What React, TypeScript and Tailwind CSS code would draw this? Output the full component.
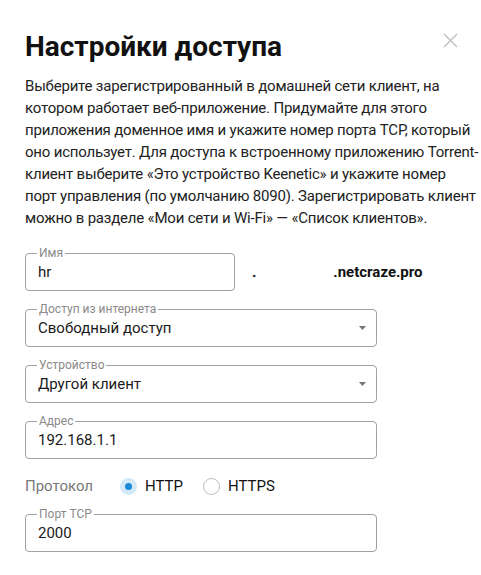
import React from 'react';

const font = { fontFamily: 'Roboto, "Noto Sans", sans-serif' };

const Field = ({ label, value, select = false, width = 'w-[352px]' }: { label: string; value: string; select?: boolean; width?: string }) => (
  <fieldset className={`${width} rounded-[4px] border border-[#a0a0a0] pl-[11px] pr-[10px]`}>
    <legend className="px-[2px] text-[12px] leading-[14px] text-[#8a8a8a]">{label}</legend>
    <div className="flex items-center justify-between pb-[8px] pl-[1px] pt-[2px]">
      <span className="text-[15px] leading-5 text-[#1a1a1a]">{value}</span>
      {select && (
        <svg width="7" height="4" viewBox="0 0 7 4">
          <path d="M0 0h7L3.5 4z" fill="#747474" />
        </svg>
      )}
    </div>
  </fieldset>
);

const App = () => {
  return (
    <div className="min-h-[575px] w-[481px] bg-white pl-[25px] pr-[23px] pt-[29px]" style={font}>
      {/* Header */}
      <div className="flex items-start justify-between">
        <h1 className="text-[28px] font-bold leading-9 text-[#111]">Настройки доступа</h1>
        <button className="mt-[4px] p-0 text-[#c4c4c4]">
          <svg width="15" height="15" viewBox="0 0 15 15">
            <path d="M1 1l13 13M14 1L1 14" stroke="currentColor" strokeWidth="1.6" />
          </svg>
        </button>
      </div>

      <p className="mt-[10px] whitespace-nowrap text-[15px] leading-[22px] tracking-[-0.2px] text-[#222]">
        Выберите зарегистрированный в домашней сети клиент, на
        <br />
        котором работает веб-приложение. Придумайте для этого
        <br />
        приложения доменное имя и укажите номер порта TCP, который
        <br />
        оно использует. Для доступа к встроенному приложению Torrent-
        <br />
        клиент выберите «Это устройство Keenetic» и укажите номер
        <br />
        порт управления (по умолчанию 8090). Зарегистрировать клиент
        <br />
        можно в разделе «Мои сети и Wi-Fi» — «Список клиентов».
      </p>

      <div className="mt-[17px] flex flex-col gap-[11px]">
        <div className="flex items-end">
          <Field label="Имя" value="hr" width="w-[210px]" />
          <span className="mb-[9px] ml-[17px] text-[15px] font-bold leading-5 text-[#111]">.</span>
          <span className="mb-[9px] ml-[77px] text-[15px] font-bold leading-5 text-[#111]">.netcraze.pro</span>
        </div>
        <Field label="Доступ из интернета" value="Свободный доступ" select />
        <Field label="Устройство" value="Другой клиент" select />
        <Field label="Адрес" value="192.168.1.1" />
      </div>

      {/* Protocol */}
      <div className="mt-[15px] flex h-6 items-center text-[15px]">
        <span className="w-[95px] text-[#777]">Протокол</span>
        <label className="flex items-center">
          <span className="flex h-[17px] w-[17px] items-center justify-center rounded-full bg-[#d4e9f8]">
            <span className="h-[7px] w-[7px] rounded-full bg-[#1a8ad8]" />
          </span>
          <span className="ml-[8px] text-[#111]">HTTP</span>
        </label>
        <label className="ml-[20px] flex items-center">
          <span className="h-[17px] w-[17px] rounded-full border border-[#bcbcbc] bg-white" />
          <span className="ml-[8px] text-[#111]">HTTPS</span>
        </label>
      </div>

      <div className="mt-[9px]">
        <Field label="Порт TCP" value="2000" />
      </div>
    </div>
  );
};

export default App;
